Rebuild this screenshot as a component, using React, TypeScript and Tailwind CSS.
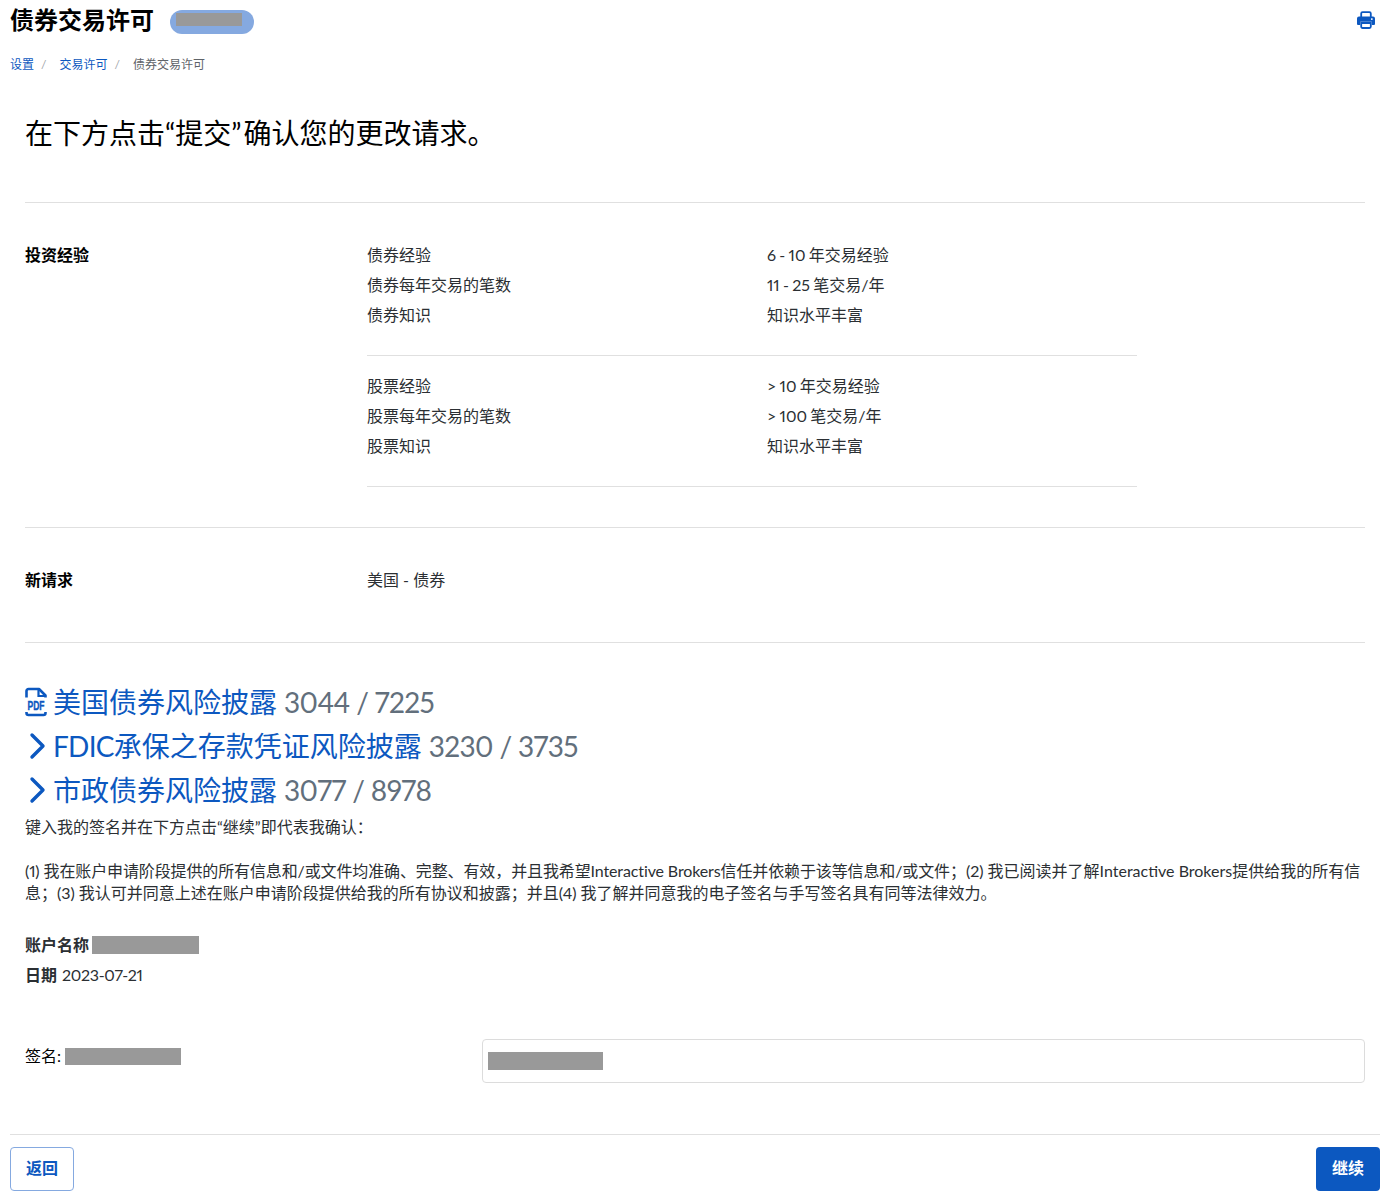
const Redacted = ({ className }: { className: string }) => (
    <span className={`inline-block bg-[#999999] ${className}`} />
);

const Chevron = () => (
    <svg viewBox="0 0 22 28" className="h-[28px] w-[22px] shrink-0 mr-[6px]" fill="none" stroke="#0c58c0" strokeWidth="3.4" strokeLinecap="round" strokeLinejoin="round">
        <path d="M7 3l11 11L7 25" />
    </svg>
);

const PdfIcon = () => (
    <svg viewBox="0 0 22 28" className="h-[28px] w-[22px] shrink-0 mr-[6px] overflow-visible" fill="none">
        <path d="M1.500 9.500V3a2 2 0 0 1 2-2h10.500l6.500 6.500v2M1.500 24v1a2 2 0 0 0 2 2h15a2 2 0 0 0 2-2v-1" stroke="#0c58c0" strokeWidth="2.600" strokeLinejoin="round" />
        <path d="M13.500 2v6h6.500" stroke="#0c58c0" strokeWidth="2.200" />
        <text x="11" y="22" textAnchor="middle" textLength="17" lengthAdjust="spacingAndGlyphs" fontSize="13" fontWeight="700" fontFamily="'Liberation Sans',sans-serif" fill="#0c58c0" stroke="#0c58c0" strokeWidth="0.4">PDF</text>
    </svg>
);

const PrinterIcon = () => (
    <svg viewBox="0 0 18 18" className="h-[18px] w-[18px]" fill="none">
        <path d="M4.200 6V2.600A1.400 1.400 0 0 1 5.600 1.200h6.800a1.400 1.400 0 0 1 1.400 1.400V6" stroke="#0c58c0" strokeWidth="1.800" />
        <path d="M2 5.500h14a2 2 0 0 1 2 2v5.500a1 1 0 0 1-1 1h-2.200v-3.200H3.200V14H1a1 1 0 0 1-1-1V7.500a2 2 0 0 1 2-2z" fill="#0c58c0" />
        <path d="M4.200 12h9.600v3.600a1.400 1.400 0 0 1-1.400 1.400H5.600a1.400 1.400 0 0 1-1.400-1.400z" stroke="#0c58c0" strokeWidth="1.800" />
        <rect x="14" y="7.300" width="1.600" height="1.600" fill="#ffffff" />
    </svg>
);

const InfoRow = ({ label, value }: { label: string; value: string }) => (
    <div className="grid grid-cols-[400px_1fr] h-[30px] items-center">
        <span>{label}</span>
        <span className="[word-spacing:-0.8px]">{value}</span>
    </div>
);

const DisclosureLink = ({ icon, title, numbers }: { icon: React.ReactNode; title: React.ReactNode; numbers: string }) => (
    <div className="flex items-center h-[44px] text-[28px]">
        {icon}
        <a className="text-[#0c58c0]">{title}</a>
        <span className="ml-[7px] text-[#626f7c] tracking-[-0.6px]">{numbers}</span>
    </div>
);

export default function App() {
    return (
        <div className="w-screen h-[1199px] overflow-hidden bg-white">
            <div className="w-[1390px] h-[1199px] text-[#2b2f33] font-['Lato','Noto_Sans_CJK_SC',sans-serif] text-[16px] proportional-nums">
                <div className="flex justify-between h-[40px] pl-[10px] pr-[15px]">
                    <div className="flex items-center">
                        <h1 className="text-[24px] font-bold text-black">债券交易许可</h1>
                        <span className="ml-[16px] mt-[4px] flex items-start pt-[3px] h-[24px] w-[84px] rounded-full bg-[#85a9e0] pl-[6px]">
                            <Redacted className="w-[66px] h-[13px]" />
                        </span>
                    </div>
                    <div className="flex items-center">
                        <PrinterIcon />
                    </div>
                </div>

                <div className="flex items-center h-[18px] mt-[16px] pl-[10px] text-[12px]">
                    <a className="text-[#0c58c0]">设置</a>
                    <span className="ml-[7px] mr-[13px] text-[#a0a5aa]">/</span>
                    <a className="text-[#0c58c0]">交易许可</a>
                    <span className="ml-[7px] mr-[13px] text-[#a0a5aa]">/</span>
                    <span className="text-[#5f6368]">债券交易许可</span>
                </div>

                <div className="px-[25px]">
                    <h2 className="mt-[38px] text-[28px] leading-[42px] text-black">
                        在下方点击“提交<span className="mr-[2px]">”</span>确认您的更改请求。
                    </h2>

                    <div className="mt-[48px] border-t border-[#e0e0e0] pt-[37px] pb-[40px] grid grid-cols-[342px_770px]">
                        <div className="font-bold h-[30px] flex items-center text-black">投资经验</div>
                        <div>
                            <InfoRow label="债券经验" value="6 - 10 年交易经验" />
                            <InfoRow label="债券每年交易的笔数" value="11 - 25 笔交易/年" />
                            <InfoRow label="债券知识" value="知识水平丰富" />
                            <div className="mt-[25px] mb-[15px] border-t border-[#e0e0e0]" />
                            <InfoRow label="股票经验" value="> 10 年交易经验" />
                            <InfoRow label="股票每年交易的笔数" value="> 100 笔交易/年" />
                            <InfoRow label="股票知识" value="知识水平丰富" />
                            <div className="mt-[25px] border-t border-[#e0e0e0]" />
                        </div>
                    </div>

                    <div className="border-t border-[#e0e0e0] pt-[37px] pb-[47px] grid grid-cols-[342px_1fr]">
                        <div className="font-bold h-[30px] flex items-center text-black">新请求</div>
                        <div className="h-[30px] flex items-center">美国 - 债券</div>
                    </div>

                    <div className="border-t border-[#e0e0e0] pt-[37px]">
                        <DisclosureLink icon={<PdfIcon />} title="美国债券风险披露" numbers="3044 / 7225" />
                        <DisclosureLink
                            icon={<Chevron />}
                            title={<><span className="tracking-[-0.75px]">FDIC</span>承保之存款凭证风险披露</>}
                            numbers="3230 / 3735"
                        />
                        <DisclosureLink icon={<Chevron />} title="市政债券风险披露" numbers="3077 / 8978" />
                    </div>

                    <p className="mt-[4px] leading-[22px]">键入我的签名并在下方点击“继续”即代表我确认：</p>
                    <p className="mt-[22px] leading-[22px]">
                        <span className="tracking-[-0.12px]">(1) 我在账户申请阶段提供的所有信息和/或文件均准确、完整、有效，并且我希望Interactive Brokers信任并依赖于该等信息和/或文件；</span>(2) 我已阅读并了解Interactive Brokers提供给我的所有信息；(3) 我认可并同意上述在账户申请阶段提供给我的所有协议和披露；并且(4) 我了解并同意我的电子签名与手写签名具有同等法律效力。
                    </p>

                    <div className="mt-[26px] flex items-center h-[30px]">
                        <b>账户名称</b>
                        <Redacted className="ml-[3px] w-[107px] h-[18px]" />
                    </div>
                    <div className="flex items-center h-[30px]">
                        <b>日期</b>
                        <span className="ml-[5px] tracking-[-0.3px]">2023-07-21</span>
                    </div>

                    <div className="mt-[49px] grid grid-cols-[457px_1fr]">
                        <div className="flex items-center h-[34px] text-black">
                            签名:
                            <Redacted className="ml-[4px] w-[116px] h-[17px]" />
                        </div>
                        <div className="flex items-center h-[44px] rounded-[4px] border border-[#dcdcdc] pl-[5px]">
                            <Redacted className="w-[115px] h-[18px]" />
                        </div>
                    </div>
                </div>

                <div className="mx-[10px] mt-[51px] border-t border-[#e0e0e0] pt-[12px] flex justify-between">
                    <button className="w-[64px] h-[44px] pb-[2px] rounded-[4px] border border-[#85a9e0] bg-white font-bold text-[#0c58c0]">返回</button>
                    <button className="w-[64px] h-[44px] pb-[2px] rounded-[4px] bg-[#0c58c0] font-bold text-white">继续</button>
                </div>
            </div>
        </div>
    );
}
